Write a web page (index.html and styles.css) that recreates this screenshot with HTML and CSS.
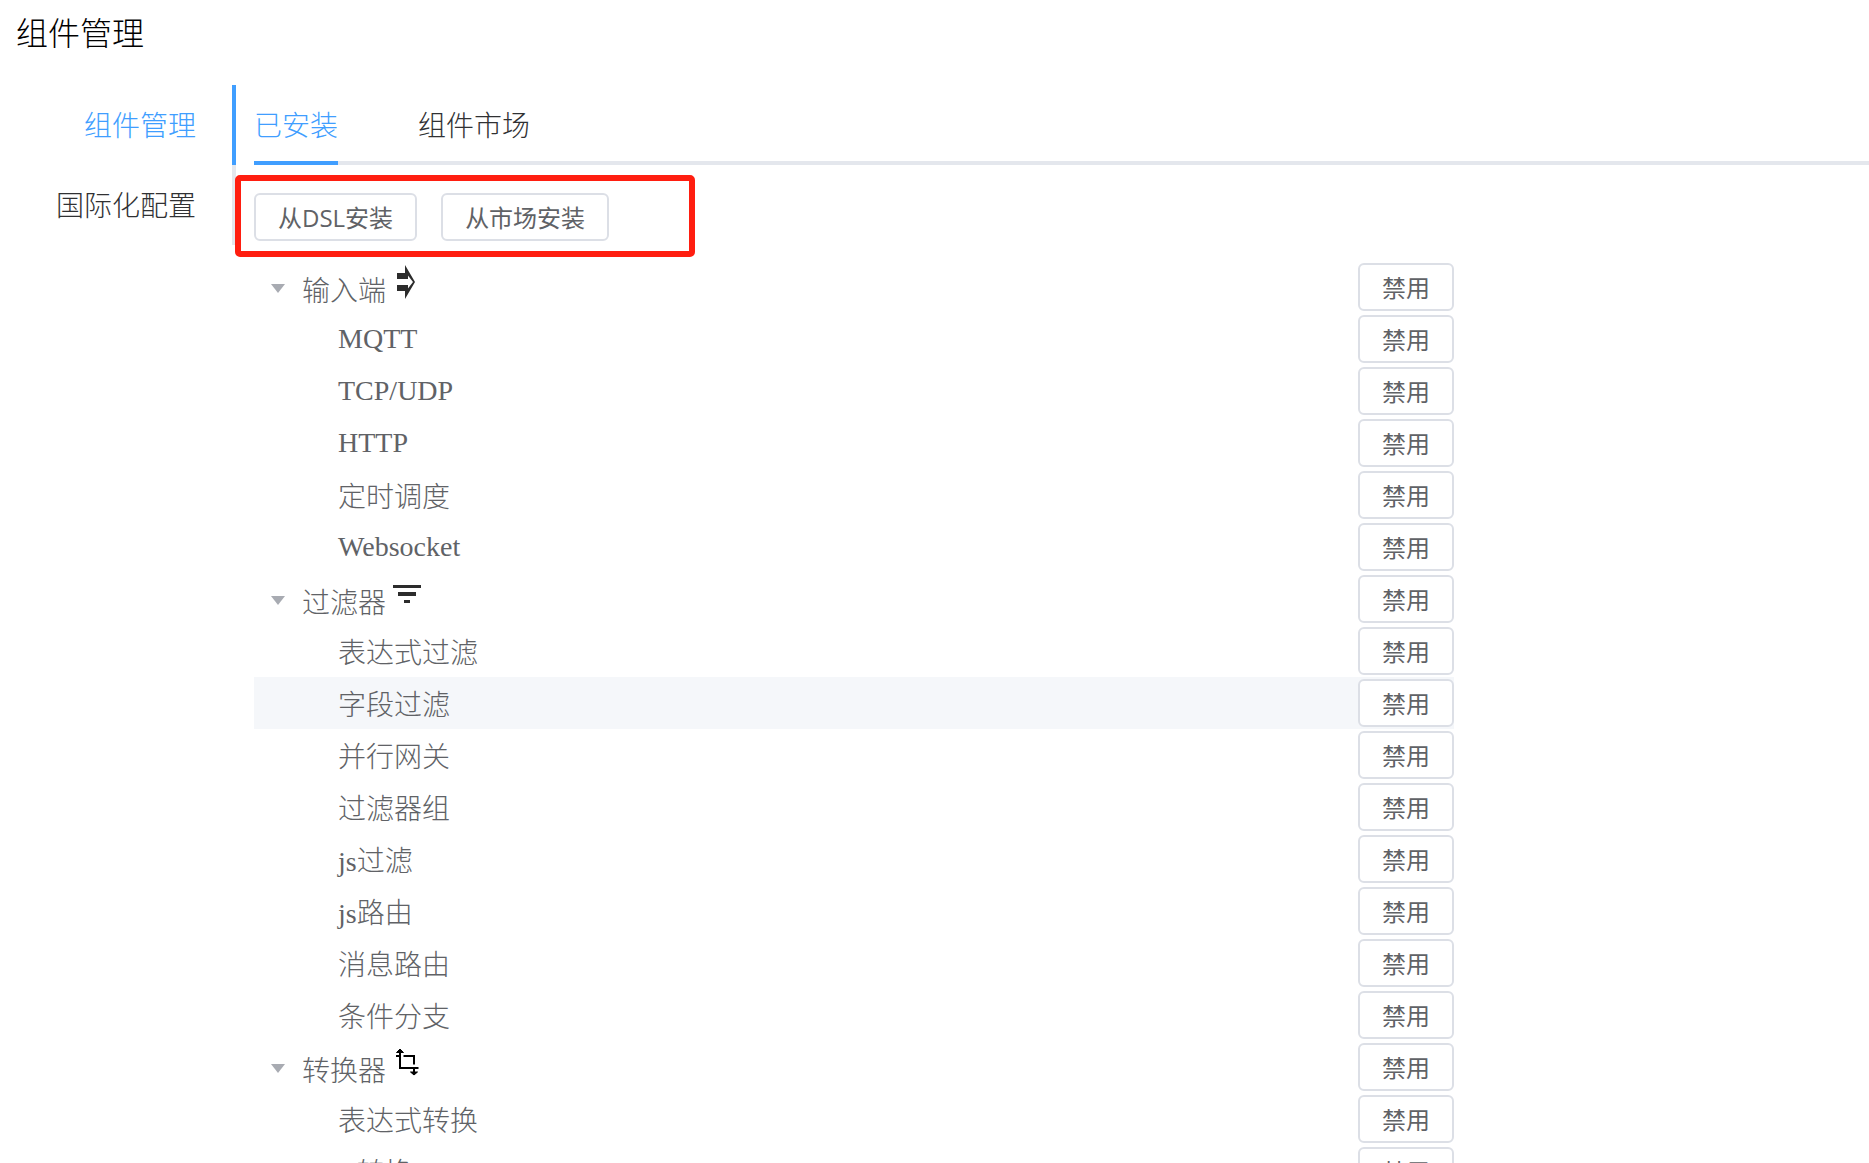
FILE: index.html
```html
<!DOCTYPE html>
<html lang="zh-CN">
<head>
<meta charset="utf-8">
<title>组件管理</title>
<link rel="stylesheet" href="styles.css">
</head>
<body>
<h1 class="page-title">组件管理</h1>
<div class="layout">
  <nav class="side" aria-label="组件管理">
    <button class="side-item active" type="button">组件管理</button>
    <button class="side-item" type="button">国际化配置</button>
  </nav>
  <main class="content">
    <div class="tabs" role="tablist">
      <button class="tab active" type="button" role="tab" aria-selected="true">已安装</button>
      <button class="tab" type="button" role="tab" aria-selected="false">组件市场</button>
    </div>
    <div class="toolbar">
      <button class="btn" type="button">从DSL安装</button>
      <button class="btn" type="button">从市场安装</button>
      <span class="marker"></span>
    </div>
    <ul class="tree">
      <li class="row group"><button class="caret" type="button" aria-label="折叠"></button><span class="label">输入端</span>
        <svg class="icon" viewBox="0 0 28 34" fill="#2c2c2c"><path d="M4 8h8V0l10 17-10 17v-8H4v-6h11l2-3-2-3H4z"/><path d="M13 8l7 9-7 9v-6H4v-6h9z" fill="#fff"/><path d="M4 8h11v6H4zM4 20h11v6H4z"/></svg>
        <button class="btn" type="button">禁用</button></li>
      <li class="row"><span class="label">MQTT</span><button class="btn" type="button">禁用</button></li>
      <li class="row"><span class="label">TCP/UDP</span><button class="btn" type="button">禁用</button></li>
      <li class="row"><span class="label">HTTP</span><button class="btn" type="button">禁用</button></li>
      <li class="row"><span class="label">定时调度</span><button class="btn" type="button">禁用</button></li>
      <li class="row"><span class="label">Websocket</span><button class="btn" type="button">禁用</button></li>
      <li class="row group"><button class="caret" type="button" aria-label="折叠"></button><span class="label">过滤器</span>
        <svg class="icon" viewBox="0 0 28 34" fill="#2c2c2c"><path d="M0 8h28v3H0zM5 15h18v4H5zM11 23h6v3h-6z"/></svg>
        <button class="btn" type="button">禁用</button></li>
      <li class="row"><span class="label">表达式过滤</span><button class="btn" type="button">禁用</button></li>
      <li class="row current"><span class="label">字段过滤</span><button class="btn" type="button">禁用</button></li>
      <li class="row"><span class="label">并行网关</span><button class="btn" type="button">禁用</button></li>
      <li class="row"><span class="label">过滤器组</span><button class="btn" type="button">禁用</button></li>
      <li class="row"><span class="label">js过滤</span><button class="btn" type="button">禁用</button></li>
      <li class="row"><span class="label">js路由</span><button class="btn" type="button">禁用</button></li>
      <li class="row"><span class="label">消息路由</span><button class="btn" type="button">禁用</button></li>
      <li class="row"><span class="label">条件分支</span><button class="btn" type="button">禁用</button></li>
      <li class="row group"><button class="caret" type="button" aria-label="折叠"></button><span class="label">转换器</span>
        <svg class="icon" viewBox="0 0 28 34" fill="none" stroke="#000" stroke-width="2"><path d="M7 5v18h18.500M3 11h3M10.500 11H21v8.500M21 24v5"/><path d="M3.500 7.500L7 4l3.500 3.500zM17.500 27h7L21 30z" fill="#000" stroke-width="1"/></svg>
        <button class="btn" type="button">禁用</button></li>
      <li class="row"><span class="label">表达式转换</span><button class="btn" type="button">禁用</button></li>
      <li class="row"><span class="label">js转换</span><button class="btn" type="button">禁用</button></li>
    </ul>
  </main>
</div>
</body>
</html>
```
FILE: styles.css
```css
* { box-sizing: border-box; }

html { scrollbar-width: none; }

body {
  margin: 0;
  padding: 16px 0 0 16px;
  background: #fff;
  color: #303133;
  font-family: "Liberation Serif", "Noto Sans CJK SC", serif;
  font-size: 28px;
  font-weight: 300;
}

button {
  margin: 0;
  padding: 0;
  border: 0;
  background: none;
  color: inherit;
  font: inherit;
  white-space: nowrap;
  cursor: pointer;
}

.page-title {
  margin: 0 0 33px;
  color: #000;
  font-size: 32px;
  font-weight: 300;
  line-height: 36px;
}

.layout { display: flex; align-items: flex-start; gap: 18px; }

.side { display: flex; flex-direction: column; flex: none; }

.side-item {
  height: 80px;
  padding: 0 40px 2px;
  text-align: right;
  box-shadow: inset -4px 0 #e4e7ed;
}
.side-item.active { color: #409eff; box-shadow: inset -4px 0 #409eff; }

.content { flex: 1; min-width: 0; }

.tabs {
  display: flex;
  gap: 80px;
  height: 80px;
  box-shadow: inset 0 -4px #e4e7ed;
}
.tab { padding-bottom: 2px; }
.tab.active { color: #409eff; box-shadow: inset 0 -4px #409eff; }

.toolbar {
  position: relative;
  display: flex;
  gap: 24px;
  padding: 28px 0 20px;
}

.marker {
  position: absolute;
  top: 10px;
  left: -19px;
  width: 460px;
  height: 82px;
  border: 6px solid #ff1e10;
  border-radius: 5px;
  pointer-events: none;
}

.btn {
  height: 48px;
  padding: 2px 22px 0;
  border: 2px solid #dcdfe6;
  border-radius: 6px;
  background: #fff;
  color: #606266;
  font-family: "Open Sans", "Noto Sans CJK SC", sans-serif;
  font-size: 24px;
  font-weight: 400;
  line-height: 42px;
}

.tree {
  max-width: 1200px;
  margin: 0;
  padding: 0;
  list-style: none;
  color: #606266;
}

.row {
  display: flex;
  align-items: center;
  height: 52px;
  padding-left: 84px;
}
.row .btn { margin-left: auto; }
.row.current { background: #f5f7fa; }
.row.group { padding-left: 12px; }
.group .label { padding-top: 4px; }

.caret {
  display: flex;
  justify-content: center;
  width: 24px;
  margin-right: 12px;
  padding-top: 2px;
}
.caret::before {
  content: "";
  border: 7px solid transparent;
  border-top: 9px solid #a8abb2;
  border-bottom: 0;
}

.icon {
  width: 28px;
  height: 34px;
  margin: 0 0 10px 7px;
}
```
